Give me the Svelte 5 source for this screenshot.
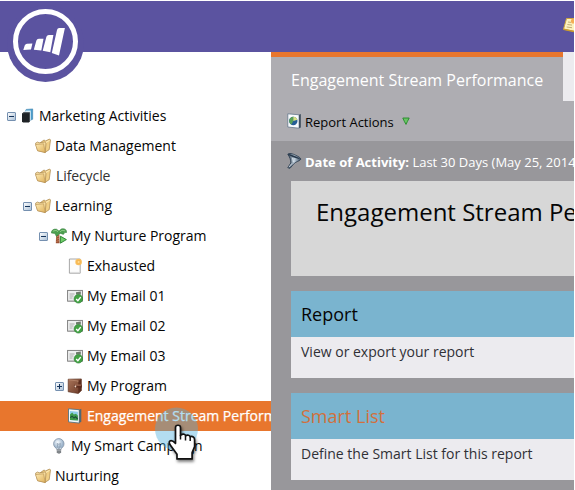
<script>
  const rows = [
    { label: 'Marketing Activities', icon: 'stack', indent: 7, toggle: '-' },
    { label: 'Data Management', icon: 'folder', indent: 23 },
    { label: 'Lifecycle', icon: 'folder', indent: 23, soft: true },
    { label: 'Learning', icon: 'folder', indent: 23, toggle: '-' },
    { label: 'My Nurture Program', icon: 'palm', indent: 39, toggle: '-' },
    { label: 'Exhausted', icon: 'page', indent: 55 },
    { label: 'My Email 01', icon: 'mail', indent: 55 },
    { label: 'My Email 02', icon: 'mail', indent: 55 },
    { label: 'My Email 03', icon: 'mail', indent: 55 },
    { label: 'My Program', icon: 'program', indent: 55, toggle: '+' },
    { label: 'Engagement Stream Performance', icon: 'report', indent: 55, selected: true },
    { label: 'My Smart Campaign', icon: 'bulb', indent: 39 },
    { label: 'Nurturing', icon: 'folder', indent: 23 }
  ];
  const cards = [
    { title: 'Report', text: 'View or export your report' },
    { title: 'Smart List', text: 'Define the Smart List for this report', hot: true }
  ];
</script>

<svg class="defs" width="0" height="0" aria-hidden="true">
  <defs>
    <linearGradient id="gold" x1="0" y1="0" x2="1" y2="1"><stop offset="0" stop-color="#fdeab4" /><stop offset="1" stop-color="#e0b25c" /></linearGradient>
    <linearGradient id="box" x1="0" y1="0" x2="1" y2="1"><stop offset="0" stop-color="#fff" /><stop offset="1" stop-color="#a9bfd5" /></linearGradient>
    <linearGradient id="leather" x1="0" y1="0" x2="1" y2="1"><stop offset="0" stop-color="#a87459" /><stop offset="1" stop-color="#6b3a28" /></linearGradient>
    <linearGradient id="steel" x1="0" y1="0" x2="1" y2="0"><stop offset="0" stop-color="#2b3c50" /><stop offset=".5" stop-color="#c4d2de" /><stop offset="1" stop-color="#34485e" /></linearGradient>
    <radialGradient id="glass" cx=".4" cy=".35"><stop offset="0" stop-color="#f6fbff" /><stop offset="1" stop-color="#9fb6cd" /></radialGradient>
  </defs>
</svg>

{#snippet icon(name)}
  <svg class="icon" width="16" height="16" viewBox="0 0 16 16">
    {#if name === 'folder'}
      <path d="M4.6 5.2 9 2l1.6.9L14.6 1l.9 1-1.3 9.7-4.4 2.8z" fill="#f0cf86" stroke="#a8844a" stroke-width=".7" />
      <path d="M10.2 4.8 14.6 2.4" stroke="#fff2c8" stroke-width=".8" />
      <path d="M.5 5.2 2.6 4l1.6.8L9.8 4l1.2 1.2-.8 9.3-7.6-1.8z" fill="#f5dca0" stroke="#a8844a" stroke-width=".7" />
      <path d="M.5 6.6 8.6 5.8l1.6 8.7-7.6-1.8z" fill="url(#gold)" stroke="#b58f50" stroke-width=".6" />
    {:else if name === 'stack'}
      <path d="M7.2 1.4 13.7.9v10.4l-2.5 1V3.4H6z" fill="#4a9ccb" stroke="#2c77a5" stroke-width=".5" />
      <path d="M4.8 3.4 6.8 2.6h5v9.2l-1.4 1V4.4z" fill="#d9edf7" />
      <path d="M3 5.6 4.6 4.2h6.2v9L9.9 14.5 4 14.6 3 13.6z" fill="#1e2226" />
      <path d="M3.6 5.7 5 4.7h5.2" fill="none" stroke="#59636b" stroke-width=".6" />
    {:else if name === 'palm'}
      <path d="M5.2 7 8.3 6.3 8.6 15.3 4.8 15.2z" fill="#9c5236" /><path d="m5.2 9 3-1m-3 3.2 3-1m-3 3.3 3-1" stroke="#cf8b64" stroke-width=".7" />
      <path d="M.3 5C.2 2.4 2.6.5 5.6 1.2L8 3l2.2-2c3-1.1 5.6.4 5.6 3.4L13.8 4.6 12.4 6.4 9.6 5.4 8 6.2 5.4 8.4 3.9 5.6z" fill="#4c9f4f" stroke="#347c3c" stroke-width=".5" />
      <path d="M1.8 3.2 5 2.3l2 1.5M14.2 2.9l-3.2-.6-2 1.6" fill="none" stroke="#93cf8c" stroke-width=".9" />
      <path d="m9.4 8.2 6 3.4-6 3.6z" fill="#6fce68" stroke="#267d2c" stroke-width=".9" />
    {:else if name === 'page'}
      <path d="M2.4 1h10.8v14.2H2.4z" fill="#fcfcfc" stroke="#929292" stroke-width=".8" />
      <path d="M3.2 14.4h9.4" stroke="#ddd" /><circle cx="11.6" cy="4" r="3.3" fill="#f9bf5e" /><circle cx="11.6" cy="4" r="1.6" fill="#ffda8c" stroke="#f0a63a" stroke-width=".6" />
    {:else if name === 'mail'}
      <rect x=".6" y="2.4" width="14.8" height="10.8" fill="#eff0f0" stroke="#777" stroke-width=".9" />
      <path d="M1.4 12.4h13" stroke="#bbb" stroke-width=".8" /><path d="M2.5 6h5M2.5 8h4M2.5 10h3" stroke="#999" stroke-width=".8" /><path d="M9 4.2 13.8 3.4v3H9z" fill="#6c7a6a" />
      <circle cx="11.4" cy="10.8" r="4.3" fill="#43a244" stroke="#257d2c" stroke-width=".6" /><path d="m9.2 10.9 1.7 1.8 2.8-3.6" fill="none" stroke="#fff" stroke-width="1.4" />
    {:else if name === 'program'}
      <path d="M1.2 1.2 14.3.9v11.5l-3 3.1L1.2 13.8z" fill="url(#leather)" stroke="#532818" stroke-width=".6" />
      <path d="m11.3 3 3-2.1v11.5l-3 3.1z" fill="#5c2e1f" /><path d="M1.8 1.8 11 3v1.2" fill="none" stroke="#c3937a" stroke-width=".6" />
      <path d="M7 6.7h7.8v2.9H7z" fill="#5a2b1d" /><path d="M7.6 7.1h6.6" stroke="#c88f73" stroke-width=".8" /><circle cx="8.4" cy="8.5" r=".9" fill="#f2d8c4" />
    {:else if name === 'report'}
      <path d="m1.5.8 10.8.9v13.4l-10.8-1.2z" fill="#f1f8fb" stroke="#567481" stroke-width=".9" /><path d="m12.3 1.7 2-.9v13l-2 1.3z" fill="#4d6874" />
      <path d="m3 3.1 7.9.6v8.9L3 11.9z" fill="#8ecdea" /><path d="m3 6.4 2.2-1.8 1.6 2L9 5.7l1.9 2v4.9L3 11.9z" fill="#3f9b4b" /><path d="m3.2 9.6 1.8-1.4 2 1.8 1.5-1.2 2.2 2.2" fill="none" stroke="#1d4d3b" stroke-width="1.1" />
    {:else if name === 'bulb'}
      <circle cx="7.8" cy="5.8" r="5.2" fill="url(#glass)" stroke="#7f91a5" stroke-width=".8" /><path d="m5.2 9.8.7 2.2h4l.7-2.2" fill="#cfdbe6" stroke="#8493a2" stroke-width=".5" />
      <path d="m6.2 5.4 1.6 1 1.6-1-.8 5H7z" fill="none" stroke="#7c8da0" stroke-width=".6" /><path d="M5.8 11.4h4.3v2.8l-1.2 1.4H7l-1.2-1.4z" fill="#666b70" /><path d="M5.8 12.5h4.3M5.9 14h4" stroke="#bfc5c8" stroke-width=".6" />
    {:else if name === 'world'}
      <path d="m.8.8 11.3 1v13.4L.8 14z" fill="#f9fbfd" stroke="#63768a" stroke-width=".8" /><path d="m12.1 1.8 1.7-.7v13.4l-1.7.7z" fill="#38495a" />
      <circle cx="6.3" cy="8" r="4.2" fill="#255d96" /><path d="M6.3 8V3.8a4.2 4.2 0 0 0-4.1 4.6 4.2 4.2 0 0 0 2.2 3.1z" fill="#58a05a" /><path d="M6.3 8V3.8c2 .1 3.5 1.1 4.1 2.9z" fill="#d6df80" />
    {:else}
      <path d="M.8 1.2C2-.2 5.6.6 8.6 2.2 11.6 3.6 14 5 13.8 6.3 12.6 8.2 9 8.6 7.2 10.4L3 15.3.8 14.7 3.8 10C4 7 2.6 3.8.8 1.2z" fill="url(#steel)" stroke="#26374a" stroke-width=".8" />
      <path d="M1.2 1.3C4 1 10 3.6 13.3 6.2 10 5.8 3.4 3.8 1.2 1.3z" fill="#26374a" />
      <path d="M5.6 5 6.4 9M4.8 10.6l-3 3.6" stroke="#e6eef5" stroke-width=".8" />
    {/if}
  </svg>
{/snippet}

<div class="app">
  <header>
    <svg class="logo" width="77" height="77" viewBox="0 0 77 77">
      <circle cx="38.5" cy="38.5" r="38.5" fill="#5b53a0" />
      <circle cx="38.5" cy="36.5" r="30" fill="none" stroke="#fff" stroke-width="5" />
      <g fill="#fff" transform="translate(-7 -5)">
        <path d="M24.8 45.2q.8-1.3 2.2-1.4l5.4-.2-1.4 6-7.7.3zM36.4 40.6q.5-1.7 2.4-1.8l4.7-.1-2.2 11.7-7.5-.6zM46.4 36.8q.7-1.7 2.4-1.8l4.6-.1L50.3 52.3l-7.6-1.5zM57 30q.5-1.8 2.2-1.9l5.7-.1L59 55.6 51.8 53z" />
      </g>
    </svg>
    <svg class="note" width="11" height="16" viewBox="0 0 11 16">
      <path d="M3.5 1.5H12v13L.5 12.2z" fill="#fdf2bf" stroke="#cba440" /><path d="m5 5 3 .4M4.4 7.5l4.6.6M3.7 10l5.3.7" stroke="#b59b62" stroke-width=".8" /><circle cx="10.5" cy="4" r="2.6" fill="#f4ae55" />
      <path d="M.5 12.2 11 14.5" stroke="#c99a2e" stroke-width="1.4" />
    </svg>
  </header>

  <div class="body">
    <nav>
      {#each rows as row}
        <div class="row" class:selected={row.selected} class:soft={row.soft} style:padding-left="{row.indent}px">
          <svg class="toggle" width="9" height="9" viewBox="0 0 9 9">
            {#if row.toggle}
              <rect x=".5" y=".5" width="8" height="8" rx=".5" fill="url(#box)" stroke="#7590b0" />
              <path d={row.toggle === '+' ? 'M2 4.5h5M4.5 2v5' : 'M2 4.5h5'} stroke="#14335a" />
            {/if}
          </svg>
          {@render icon(row.icon)}
          <span>{row.label}</span>
        </div>
      {/each}
      <svg class="pointer" width="48" height="58" viewBox="0 0 48 58">
        <circle cx="21.5" cy="22" r="21.5" fill="#4aaede" fill-opacity=".42" />
        <path class="hand" d="M20.5 20.5c0-3 5-3 5 0v8l.8-.8c2-1.4 4-.3 4.3 1 2-1.2 4-.4 4.5 1 2.5-.8 4.5.5 4.5 3v7l-2.5 6v6.2H22v-4.7l-6.2-8.5c-3.8-4.8 0-7 4.7-2.4z" fill="#fff" stroke="#111" stroke-width="1.7" stroke-linejoin="round" />
        <path d="M25.5 28v4.5M30.5 29v4.5M35.2 30v4" stroke="#111" stroke-width="1.5" />
      </svg>
    </nav>

    <main>
      <div class="upper">
        <div class="tab">Engagement Stream Performance</div>
        <div class="tab-rest"></div>
        <div class="actions">
          {@render icon('world')}<span>Report Actions</span>
          <svg width="8" height="8" viewBox="0 0 8 8"><path d="M.8 1h6.4L5.3 4.7 4 7.4 2.5 4.7z" fill="#69c465" stroke="#258a29" stroke-width=".9" /></svg>
        </div>
      </div>
      <div class="filter">{@render icon('funnel')}<span><b>Date of Activity:</b> Last 30 Days (May 25, 2014 - Jun 23, 2014)</span></div>
      <div class="content">
        <h1>Engagement Stream Performance</h1>
        {#each cards as card}
          <section>
            <h2 class:hot={card.hot}>{card.title}</h2>
            <p>{card.text}</p>
          </section>
        {/each}
      </div>
    </main>
  </div>
</div>

<style>
  .defs { position: absolute; }
  .app { width: 574px; height: 489px; padding-top: 1px; overflow: hidden; background: #fff; font-family: "Open Sans", "Noto Sans", sans-serif; font-size: 14px; color: #050505; }
  header { height: 51px; background: #5b53a0; position: relative; z-index: 2; }
  .logo { position: absolute; left: 7px; top: 4px; }
  .note { position: absolute; left: 563px; top: 16px; }
  .body { display: flex; height: 438px; }
  nav { width: 271px; flex: none; box-sizing: border-box; padding-top: 49px; position: relative; overflow: hidden; }
  .row { display: flex; align-items: center; height: 30px; box-sizing: border-box; white-space: nowrap; line-height: 20px; }
  .toggle { flex: none; margin-right: 3px; }
  .icon { flex: none; }
  .row .icon { margin-right: 4px; }
  .soft { color: #333; }
  .soft span { padding-left: 1px; letter-spacing: -.1px; }
  .selected { background: #e8762d; color: #fff; }
  .selected span { -webkit-text-stroke: .25px #fff; }
  .pointer { position: absolute; left: 155px; top: 355px; }
  .hand { filter: drop-shadow(1px 2px 1.5px #0008); }
  main { width: 303px; background: #98979b; overflow: hidden; white-space: nowrap; }
  .upper { display: grid; grid-template-columns: 292px 11px; grid-template-rows: 49px 40px; background: #aeadb2; }
  .tab { box-sizing: border-box; border-top: 5px solid #e8762d; padding-left: 20px; font-size: 16px; line-height: 47px; color: #fff; }
  .tab-rest { background: #ecebef; }
  .actions { grid-column: 1 / 3; display: flex; align-items: center; padding-left: 16px; font-size: 13px; }
  .actions span { margin: 0 8px 0 2px; padding-top: 2px; }
  .filter { display: flex; align-items: center; height: 40px; padding-left: 16px; color: #fff; font-size: 13px; }
  .filter span { margin-left: 2px; padding-top: 2px; }
  .content { padding-left: 20px; }
  h1 { box-sizing: border-box; height: 95px; margin: 0 0 15px; padding: 14px 0 0 25px; background: #d7d7d7; font-size: 24px; line-height: 34px; font-weight: 400; }
  section { height: 87px; margin-bottom: 15px; background: #ecebef; }
  h2 { height: 46px; margin: 0; padding-left: 10px; background: #7ab4cf; font-size: 18px; line-height: 47px; font-weight: 400; }
  .hot { color: #d2703c; }
  p { margin: 0; padding: 5px 0 0 10px; line-height: 20px; color: #303036; }
</style>
